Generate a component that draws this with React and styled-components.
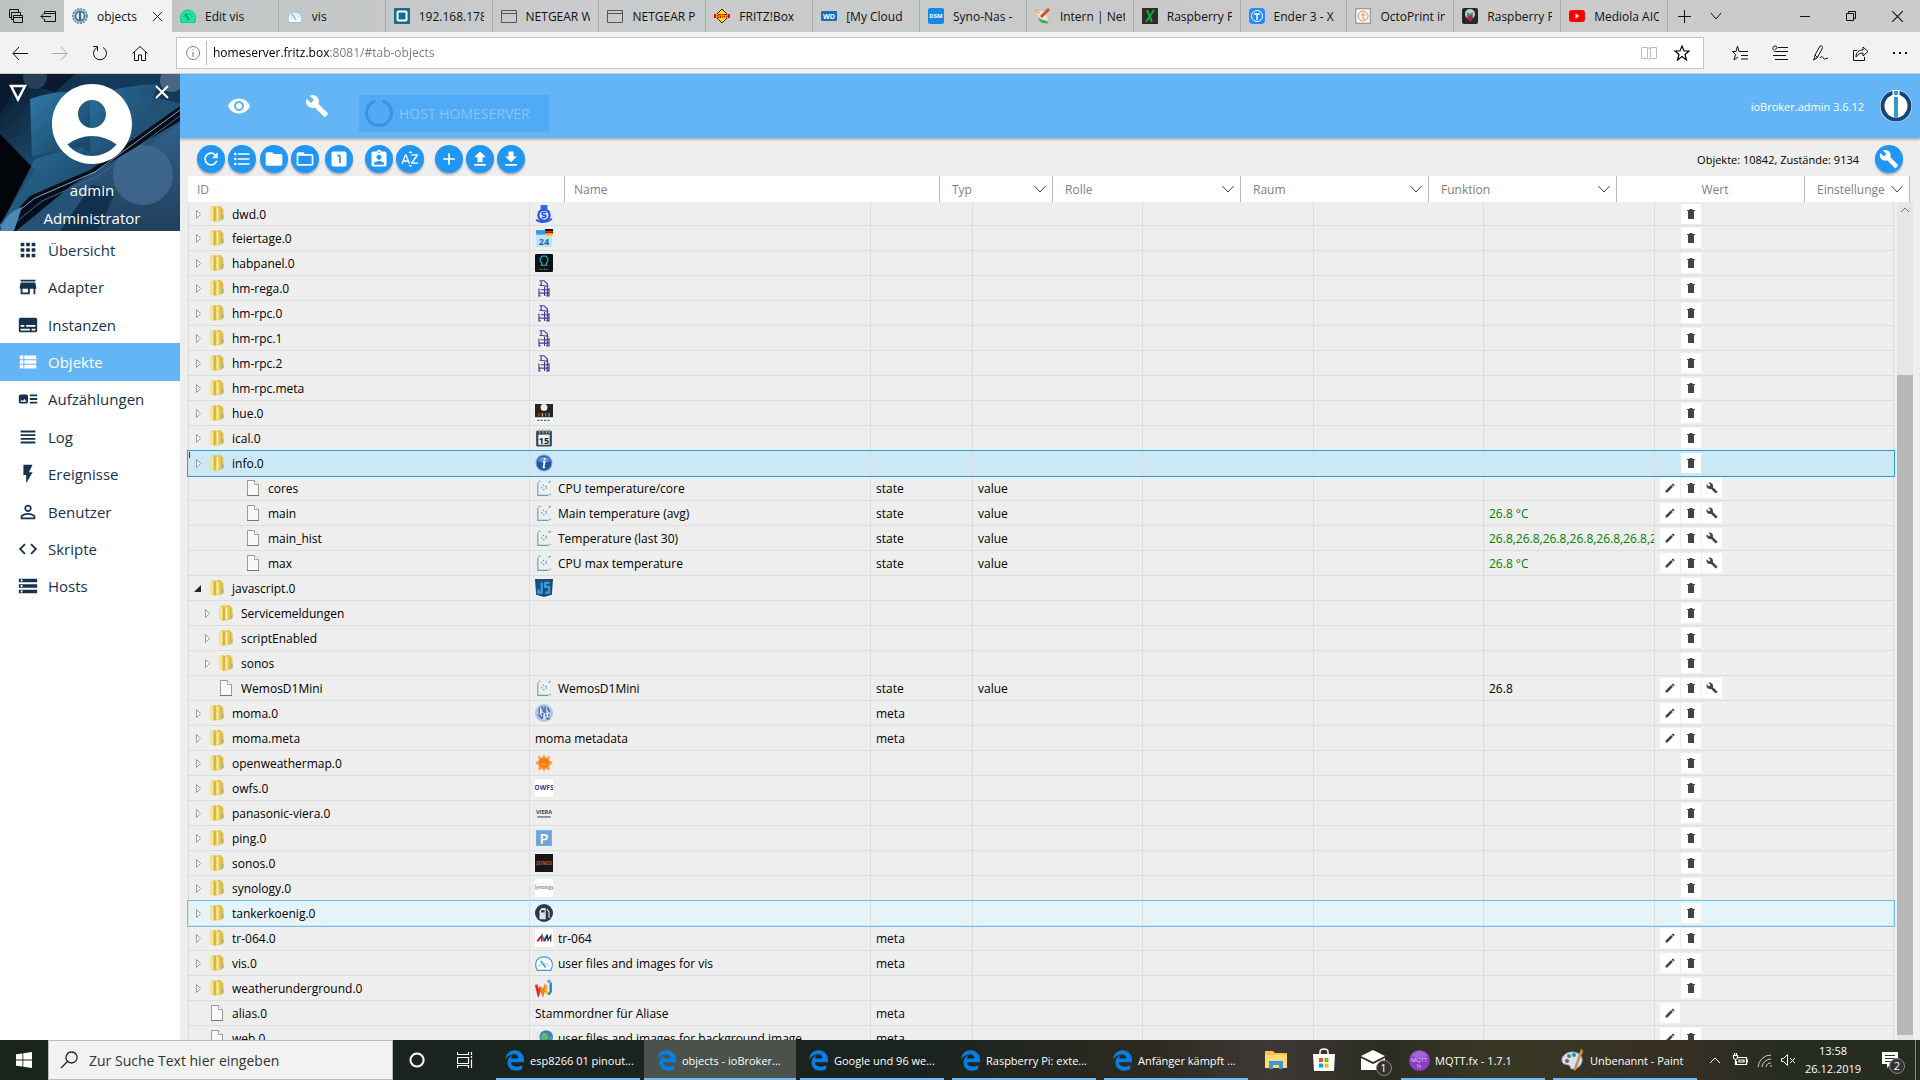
import React from "react";
import styled, { createGlobalStyle } from "styled-components";
import {
    MdApps, MdStore, MdSubtitles, MdViewList, MdArtTrack, MdViewHeadline, MdFlashOn,
    MdPermIdentity, MdCode, MdStorage, MdVisibility, MdBuild, MdAccountCircle,
    MdRefresh, MdFormatListBulleted, MdFolder, MdFolderOpen, MdLooksOne, MdAssignmentInd,
    MdSortByAlpha, MdAdd, MdFileUpload, MdFileDownload, MdEdit
} from "react-icons/md";
import { FaEdgeLegacy } from "react-icons/fa";

const GlobalStyle = createGlobalStyle`
    * {
        box-sizing: border-box;
    }

    body {
        margin: 0;
        overflow: hidden;
        background: #eee;
        font-family: "Open Sans", "Noto Sans", sans-serif;
        font-size: 12px;
        color: #000;
    }

    button, input, select {
        font-family: inherit;
        margin: 0;
        padding: 0;
        border: 0;
        border-radius: 0;
        background: none;
        outline: none;
    }

    svg {
        display: block;
        flex-shrink: 0;
    }
`;

const Page = styled.div`
    display: flex;
    flex-direction: column;
    height: 100vh;
`;

/* ---------- browser ---------- */

const TabBar = styled.div`
    display: flex;
    height: 32px;
    background: linear-gradient(90deg, #bfc3c4, #c9cbcc 30%, #c9c9c9 60%, #cbcbcb);
`;

const BarButton = styled.button`
    display: flex;
    align-items: center;
    justify-content: center;
    width: ${(props) => props.$width || 32}px;
    height: 100%;
    color: ${(props) => props.$color || "#111"};
`;

const Tabs = styled.div`
    display: flex;
    flex: 1;
    min-width: 0;
`;

const Tab = styled.a`
    display: flex;
    align-items: center;
    gap: 9px;
    flex: ${(props) => (props.$active ? "0 0 108px" : "1 1 0")};
    min-width: 0;
    padding: 0 8px;
    border-right: 1px solid ${(props) => (props.$active ? "#f2f2f2" : "#a9abac")};
    background: ${(props) => (props.$active ? "#f2f2f2" : "transparent")};
    color: #111;
    text-decoration: none;
`;

const TabTitle = styled.span`
    flex: 1;
    overflow: hidden;
    white-space: nowrap;
`;

const WindowButtons = styled.div`
    display: flex;
    width: 252px;
`;

const Spacer = styled.div`
    flex: 1;
`;

const AddressBar = styled.div`
    display: flex;
    align-items: center;
    height: 42px;
    background: #f2f2f2;
    border-bottom: 1px solid #ccc;
`;

const NavButtons = styled.div`
    display: flex;
    width: 176px;
    height: 40px;
`;

const AddressField = styled.label`
    display: flex;
    align-items: center;
    flex: 1;
    height: 32px;
    padding: 0 13px 0 9px;
    border: 1px solid #c5c5c5;
    background: #fff;
`;

const AddressInput = styled.input`
    flex: 1;
    height: 24px;
    margin: 0 12px 0 6px;
    padding-left: 6px;
    border-left: 1px solid #bbb;
    font-size: 12px;
    color: transparent;
    background: linear-gradient(90deg, #000 123px, #777 123px);
    background-clip: text;
`;

const AddressIcons = styled.div`
    display: flex;
    gap: 17px;
`;

const BrowserTools = styled.div`
    display: flex;
    height: 40px;
    padding-left: 16px;
`;

/* ---------- sidebar ---------- */

const Main = styled.main`
    display: flex;
    flex: 1;
    min-height: 0;
`;

const Sidebar = styled.aside`
    width: 180px;
    background: #fff;
    overflow: hidden;
`;

const UserBox = styled.div`
    position: relative;
    height: 157px;
    padding: 10px 5px 0 9px;
    color: #fff;
`;

const UserBackground = styled.svg`
    position: absolute;
    inset: 0;
    width: 100%;
    height: 100%;
`;

const UserTop = styled.div`
    position: relative;
    display: flex;
    justify-content: space-between;
    align-items: flex-start;
    margin-bottom: 12px;
`;

const Avatar = styled(MdAccountCircle)`
    margin: -8px 0;
`;

const UserName = styled.div`
    position: relative;
    font-size: 15px;
    line-height: 28px;
    text-align: center;
`;

const UserButton = styled.button`
    width: 20px;
    height: 16px;
    color: #fff;
`;

const Menu = styled.nav`
    display: flex;
    flex-direction: column;
    height: 374px;
`;

const MenuItem = styled.a`
    display: flex;
    align-items: center;
    flex: 1;
    gap: 9px;
    padding-left: 17px;
    font-size: 15px;
    color: ${(props) => (props.$active ? "#fff" : "#17324f")};
    background: ${(props) => (props.$active ? "#64b5f6" : "#fff")};
    text-decoration: none;
`;

/* ---------- content ---------- */

const Content = styled.section`
    display: flex;
    flex-direction: column;
    flex: 1;
    min-width: 0;
`;

const Header = styled.header`
    display: flex;
    align-items: center;
    height: 64px;
    padding: 0 8px 0 47px;
    background: #64b5f6;
    box-shadow: 0 2px 2px rgba(0, 0, 0, 0.25);
    color: #fff;
`;

const HeaderButton = styled.button`
    width: 24px;
    height: 24px;
    margin-right: 54px;
    color: #fff;
`;

const HostButton = styled.button`
    display: flex;
    align-items: center;
    gap: 6px;
    width: 190px;
    height: 36px;
    margin: 14px 0 0 -24px;
    padding-left: 6px;
    border-radius: 2px;
    background: #50abf6;
    box-shadow: 0 1px 2px rgba(0, 0, 0, 0.08);
    font-size: 14px;
    color: #85c4f9;
`;

const Version = styled.span`
    margin-right: 16px;
    font-size: 11px;
`;

const Toolbar = styled.div`
    display: flex;
    align-items: center;
    gap: 3px;
    height: 38px;
    padding: 4px 17px 0;
`;

const RoundButton = styled.button`
    display: flex;
    align-items: center;
    justify-content: center;
    width: 28px;
    height: 28px;
    margin-left: ${(props) => props.$space || 0}px;
    border-radius: 50%;
    background: #2196f3;
    box-shadow: 0 2px 2px rgba(0, 0, 0, 0.25);
    color: #fff;
`;

const Counter = styled.span`
    margin-right: 13px;
    font-size: 11px;
`;

const Filters = styled.div`
    display: grid;
    grid-template-columns: 377fr 375fr 113fr 188fr 188fr 188fr 188fr 105fr;
    height: 26px;
    margin: 0 10px 0 8px;
    background: #fff;
`;

const FilterCell = styled.label`
    position: relative;
    display: flex;
    align-items: center;
    justify-content: ${(props) => (props.$center ? "center" : "flex-start")};
    min-width: 0;
    padding-left: ${(props) => props.$pad || 9}px;
    border-right: 1px solid #b5b5b5;
    color: #808080;
`;

const FilterInput = styled.input`
    width: 100%;
    font-size: 12px;

    &::placeholder {
        color: #808080;
        opacity: 1;
    }
`;

const FilterSelect = styled.select`
    width: 100%;
    margin-right: 24px;
    appearance: none;
    font-size: 12px;
    color: #808080;
`;

const SelectArrow = styled.svg`
    position: absolute;
    right: 6px;
    pointer-events: none;
`;

const Body = styled.div`
    display: flex;
    flex: 1;
    min-height: 0;
    padding-right: 7px;
`;

const TableArea = styled.div`
    flex: 1;
    min-width: 0;
    padding: 0 3px 0 8px;
    overflow: hidden;
`;

const Table = styled.table`
    width: 100%;
    table-layout: fixed;
    border-collapse: separate;
    border-spacing: 0;
    line-height: 20px;
`;

const rowColors = {
    selected: ["#cbe8f6", "#26a0da"],
    hover: ["#e5f3fb", "#70c0e7"]
};

const Row = styled.tr`
    background: ${(props) => (props.$state ? rowColors[props.$state][0] : "transparent")};
    outline: ${(props) => (props.$state ? `1px solid ${rowColors[props.$state][1]}` : "none")};

    &:first-child td {
        height: 24px;
    }
`;

const Cell = styled.td`
    height: 25px;
    padding: ${(props) => (props.$text ? 2 : 0)}px 0 0 5px;
    border-right: 1px solid #ddd;
    border-bottom: 1px solid #ddd;
    overflow: hidden;
    white-space: nowrap;
    color: ${(props) => (props.$green ? "#008000" : "#000")};

    &:first-child {
        padding-left: 0;
        border-left: 1px solid #ddd;
    }
`;

const TreeNode = styled.div`
    position: relative;
    display: flex;
    align-items: center;
    height: 22px;
    padding-left: ${(props) => props.$level * 9 + 1}px;
`;

const Caret = styled.span`
    position: absolute;
    left: 0;
    top: 0;
    width: 1px;
    height: 6px;
    background: #6b2a1c;
`;

const Expander = styled.button`
    width: 16px;
    height: 16px;
    margin-right: 3px;
`;

const NodeName = styled.span`
    margin-left: 7px;
    padding-top: 2px;
`;

const NameBox = styled.div`
    display: flex;
    align-items: center;
    gap: 5px;
    height: 22px;
`;

const NameText = styled.span`
    padding-top: 2px;
`;

const Actions = styled.div`
    display: flex;
    gap: 1px;
    height: 20px;
`;

const ActionButton = styled.button`
    display: flex;
    align-items: center;
    justify-content: center;
    width: 20px;
    height: 20px;
    background: #fff;
    color: #444;
`;

const ActionGap = styled.span`
    width: 20px;
`;

const Scrollbar = styled.div`
    display: flex;
    flex-direction: column;
    width: 16px;
    padding-bottom: 5px;
    background: #e6e6e6;
`;

const ScrollTrack = styled.div`
    flex: 156;
`;

const ScrollThumb = styled.div`
    flex: 660;
    background: #b8b8b8;
`;

/* ---------- taskbar ---------- */

const Taskbar = styled.footer`
    display: flex;
    height: 40px;
    background: linear-gradient(90deg, #1a241b 0%, #1b2320 48%, #2c2a20 60%, #3e3836 66%, #2b2d22 72%, #3a3825 78%, #352f24 88%, #252d20 93%, #272c20 100%);
    color: #fff;
`;

const SearchBox = styled.label`
    display: flex;
    align-items: center;
    gap: 11px;
    width: 345px;
    padding-left: 11px;
    border: 1px solid #bbb;
    background: #f2f2f2;
    color: #222;
`;

const SearchInput = styled.input`
    flex: 1;
    font-size: 14px;

    &::placeholder {
        color: #333;
        opacity: 1;
    }
`;

const Task = styled.button`
    display: flex;
    align-items: center;
    gap: 5px;
    width: 152px;
    padding: 0 8px 0 12px;
    background-color: ${(props) => (props.$active ? "#4b524b" : "transparent")};
    background-image: linear-gradient(#76b9ed, #76b9ed);
    background-size: ${(props) => (props.$active ? 152 : 144)}px 2px;
    background-position: center bottom;
    background-repeat: no-repeat;
    color: #fff;
    font-size: 11px;
    white-space: nowrap;
`;

const TaskGroup = styled.div`
    display: flex;
    padding-left: 3px;
`;

const Clock = styled.div`
    width: 64px;
    margin-left: 2px;
    line-height: 18px;
    padding-top: 2px;
    font-size: 11px;
    text-align: center;
`;

const BadgeHolder = styled.span`
    position: relative;
`;

const Badge = styled.span`
    position: absolute;
    right: -7px;
    bottom: -6px;
    width: 16px;
    height: 16px;
    border: 1px solid #888;
    border-radius: 50%;
    background: #333;
    color: #fff;
    font-size: 11px;
    line-height: 14px;
    text-align: center;
`;

const DesktopStrip = styled.button`
    width: 5px;
    border-left: 1px solid #8a8a80;
`;

/* ---------- drawings ---------- */

const Line = ({ size = 16, d, width = 1, box = 16, fill = "none", color = "currentColor" }) => (
    <svg width={size} height={size} viewBox={`0 0 ${box} ${box}`} fill={fill} stroke={color} strokeWidth={width}>
        <path d={d} />
    </svg>
);

const Chevron = ({ up, size = 12 }) => (
    <Line size={size} box={12} d={up ? "M1 9l5-5 5 5" : "M1 3l5 6 5-6"} />
);

const Picture = ({ size = 16, children }) => (
    <svg width={size} height={size} viewBox="0 0 16 16">{children}</svg>
);

const Label = ({ x = 8, y = 11, size = 6, fill = "#fff", children, weight = 700 }) => (
    <text x={x} y={y} fontSize={size} fontWeight={weight} fill={fill} textAnchor="middle">{children}</text>
);

const Gauge = ({ fill, stroke }) => (
    <>
        <path d="M2 14.500A7 7 0 1 1 14 14.500Z" fill={fill} stroke={stroke} />
        <path d="M5 6l4 6" stroke={stroke} strokeWidth="1.500" />
        <path d="M4 10a4 4 0 0 1 8 0" fill="none" stroke={stroke} strokeDasharray="1 1" />
    </>
);

const pageIcon = <path d="M.5 2.500h15v12H.5zM.5 5.500h15" fill="none" stroke="#555" />;

const pictures = {
    objects: (
        <>
            <circle cx="8" cy="8" r="7" fill="#b9d2e4" stroke="#7a8994" strokeWidth="2" strokeDasharray="2 1" />
            <circle cx="8" cy="8" r="4.500" fill="#dcecf6" stroke="#2b6ca8" strokeWidth="1.500" />
            <path d="M8 3v10" stroke="#2b6ca8" strokeWidth="2" />
        </>
    ),
    editVis: (
        <>
            <path d="M1 14.500C-1 8 2 2 8 2s9 6 7 12.500z" fill="#1ee59b" stroke="#12c985" />
            <path d="M5 6l4 6" stroke="#0e8f62" strokeWidth="1.500" />
            <path d="M3.500 9a5 5 0 0 1 9 0" fill="none" stroke="#0e8f62" strokeDasharray="1 1" />
        </>
    ),
    visTab: <Gauge fill="#f4faff" stroke="#8cc0e6" />,
    vis: (
        <>
            <path d="M2 14.500C-1 9 1 2.500 8 2.500S17 9 14 14.500z" fill="#fff" stroke="#4199d6" />
            <path d="M5 6l4.500 6" stroke="#4199d6" strokeWidth="1.500" />
            <path d="M3.500 11a5 5 0 0 1 9 0" fill="none" stroke="#6fb2e0" strokeDasharray="1 1" />
        </>
    ),
    ccu: (
        <>
            <rect width="16" height="16" rx="1" fill="#136f92" />
            <rect x="3.500" y="3.500" width="9" height="9" rx="1" fill="#136f92" stroke="#fff" strokeWidth="2" />
        </>
    ),
    page: pageIcon,
    fritz: (
        <>
            <path d="M8 1l7 7-7 7-7-7z" fill="#ffe100" stroke="#222" />
            <path d="M0 6h16v4H0z" fill="#e2001a" />
            <Label y={10} size={5} fill="#ffe100">Fritz!</Label>
        </>
    ),
    wd: (
        <>
            <rect y="3" width="16" height="10" rx="1" fill="#1d6fae" />
            <Label y={11} size={7}>WD</Label>
        </>
    ),
    dsm: (
        <>
            <rect width="16" height="16" rx="2" fill="#158be5" />
            <Label y={10} size={6}>DSM</Label>
        </>
    ),
    intern: (
        <>
            <path d="M1 3h9l3 9-8 1z" fill="#efe6cc" />
            <path d="M0 2l4 1M1 4l4 1" stroke="#e59a3c" />
            <path d="M14 1L6 9" stroke="#d4502f" strokeWidth="3" />
            <path d="M3 9c3 4 7 2 11 6-5 1-10 0-11-6z" fill="#35b04a" />
        </>
    ),
    xda: (
        <>
            <rect width="16" height="16" fill="#2a2b2b" />
            <path d="M5 2l5 12M12 2L4 14" stroke="#1fa52f" strokeWidth="2" />
        </>
    ),
    thing: (
        <>
            <rect width="16" height="16" rx="4" fill="#248bfb" />
            <circle cx="8" cy="8" r="5.500" fill="none" stroke="#fff" />
            <path d="M5 6h6M8 6v6" stroke="#fff" strokeWidth="1.500" />
        </>
    ),
    octo: (
        <>
            <rect x=".5" y=".5" width="15" height="15" fill="#f4f4f4" stroke="#999" strokeWidth="1.500" />
            <circle cx="8" cy="8" r="5" fill="none" stroke="#f29a4a" />
            <path d="M8 4v7h3M6 7h5" fill="none" stroke="#f29a4a" />
        </>
    ),
    raspberry: (
        <>
            <rect width="16" height="16" rx="2" fill="#25282a" />
            <circle cx="8" cy="6" r="5" fill="#c8ccd0" />
            <path d="M5 7h6l-1 5-2 2-2-2z" fill="#b5214c" />
            <path d="M5 5l3 2 3-2" stroke="#3c9a46" strokeWidth="2" fill="none" />
        </>
    ),
    youtube: (
        <>
            <rect y="2" width="16" height="12" rx="3" fill="#f00" />
            <path d="M6.500 5.500v5l4-2.500z" fill="#fff" />
        </>
    ),
    dwd: (
        <>
            <path d="M5 0h6v4H5z" fill="#3563ee" />
            <circle cx="8" cy="9" r="5" fill="none" stroke="#2456ec" strokeWidth="2" />
            <path d="M10 7c-4-2-5 2-2 2s2 3-2 2M1 13c3 3 11 3 14-1" fill="none" stroke="#2456ec" strokeWidth="1.500" />
        </>
    ),
    feiertage: (
        <>
            <rect x="1" y="3" width="14" height="13" fill="#c1e2fb" />
            <rect x="1" y="1" width="8" height="4" fill="#2f9cec" />
            <path d="M9 0h7v2H9z" fill="#111" />
            <path d="M9 2h7v2H9z" fill="#d8000f" />
            <path d="M9 4h7v2H9z" fill="#f7c600" />
            <Label y={14} size={8} fill="#1667b7">24</Label>
        </>
    ),
    habpanel: (
        <>
            <rect width="16" height="16" rx="1" fill="#0c1114" />
            <path d="M6 10V8a3.500 3.500 0 1 1 4 0v2M5 10h6" fill="none" stroke="#17b8d8" />
            <path d="M4 13.500h8" stroke="#999" strokeDasharray="1 1" />
        </>
    ),
    hm: (
        <path
            d="M4 1.500h4l3 3v10M5.500 1v5M4 5.500l8 1M5 9.500h7M3.500 8.500v7M3 12.500h10M8.500 6v9M12.500 8v7M3 15h2M10 15h3"
            fill="none" stroke="#463a94"
        />
    ),
    hue: (
        <>
            <rect width="16" height="12" fill="#252525" />
            <circle cx="8" cy="3" r="3" fill="#f0f0ea" />
            <path d="M0 12h16v4H0z" fill="#fff" />
            <path d="M3.500 8v3" stroke="#e23b31" />
            <path d="M6.500 8v3" stroke="#f4d12c" />
            <path d="M9.500 8v3" stroke="#46a4df" />
            <path d="M12.500 8v3" stroke="#aaa" />
            <path d="M2 14.500h12" stroke="#3a5f9a" strokeDasharray="2 1" />
        </>
    ),
    ical: (
        <>
            <rect x="1" y="1.500" width="14" height="14" rx="1" fill="#3a4750" />
            <rect x="3" y="5" width="10" height="9" fill="#f5f5f5" />
            <path d="M4 0v4M7 0v4M10 0v4M12.500 0v4" stroke="#8bb4d6" />
            <Label y={13} size={8} fill="#222">15</Label>
        </>
    ),
    info: (
        <>
            <circle cx="8" cy="8" r="7" fill="#1d55ab" stroke="#7f97bd" />
            <path d="M2.500 6a6 6 0 0 1 11 0c-3 2-8 2-11 0z" fill="#5e94dc" />
            <circle cx="8.500" cy="4.500" r="1" fill="#fff" />
            <path d="M7 7h1.500l-1 5H9" fill="none" stroke="#fff" strokeWidth="1.500" />
        </>
    ),
    state: (
        <>
            <path d="M2.500 3v11.500H12M13.500 13v1.500M14 2l-2 1M3 2h2" fill="none" stroke="#5aa3ba" />
            <circle cx="8" cy="7.500" r="2" fill="none" stroke="#4a8ca6" strokeDasharray="1 1.500" />
        </>
    ),
    js: (
        <>
            <path d="M0 0h16l-1 14-7 2-7-2z" fill="#1a4c7c" />
            <path d="M3 9v3h3V3M13 3.500h-4V7h3.500v5H9" fill="none" stroke="#3a9bd7" strokeWidth="2" />
        </>
    ),
    moma: (
        <>
            <circle cx="8" cy="8" r="8" fill="#adc6e8" />
            <path d="M4 3v5M6 2l2 5M9 2v6M11 3l2 4M3 9l3 4M7 8v5M9 10h4M10 13h3" stroke="#5272ac" strokeWidth="1.500" />
            <path d="M5 4v4M8 9v5M11 8v3" stroke="#fff" />
        </>
    ),
    sun: (
        <>
            <path d="M8 0l1.500 3 4-1.500-1 3.500L16 8l-3.500 2.500 1 4-4-1.500L8 16l-1.500-3-4 1.500 1-4L0 8l3.500-3-1-3.500 4 1.500z" fill="#f9a046" />
            <circle cx="8" cy="8" r="4.500" fill="#f67c14" />
            <path d="M6 9.500h4" stroke="#ffb45c" />
        </>
    ),
    owfs: (
        <>
            <rect width="16" height="16" fill="#fff" />
            <Label y={10} size={6} fill="#2f4689">OWFS</Label>
        </>
    ),
    viera: (
        <>
            <Label y={9} size={5} fill="#444">VIERA</Label>
            <path d="M2 11.500h12" stroke="#555" />
        </>
    ),
    ping: (
        <>
            <rect x="1" y="1" width="14" height="14" fill="#6ea4d8" />
            <Label y={13} size={13} weight={600}>P</Label>
        </>
    ),
    sonos: (
        <>
            <rect width="16" height="16" fill="#171717" />
            <Label y={10} size={4} fill="#d8532d">SONOS</Label>
        </>
    ),
    synology: (
        <>
            <rect width="16" height="16" fill="#fff" />
            <Label y={9} size={4} fill="#777" weight={600}>Synology</Label>
        </>
    ),
    fuel: (
        <>
            <circle cx="8" cy="8" r="8" fill="#28394a" />
            <path d="M4 13.500V6l2-2.500h3.500v10z" fill="#dfe3e6" />
            <path d="M5.500 5.500h3v2h-3z" fill="#28394a" />
            <path d="M10.500 4.500L12.500 7v5.500" fill="none" stroke="#dfe3e6" />
        </>
    ),
    avm: (
        <>
            <rect width="16" height="16" fill="#fff" />
            <path d="M2 11l4-5v5" fill="none" stroke="#e2001a" strokeWidth="1.500" />
            <path d="M6 5l2 5 3-5" fill="none" stroke="#2089d3" strokeWidth="1.500" />
            <path d="M8.500 11l2.500-5 .5 4L14 6v5" fill="none" stroke="#222" />
        </>
    ),
    wu: (
        <>
            <path d="M1 5l2 8 2-6" fill="none" stroke="#e4312c" strokeWidth="2.500" />
            <path d="M5 7l2 6 2.500-8" fill="none" stroke="#f58220" strokeWidth="2.500" />
            <path d="M10 6v5q2 5 4-1V5" fill="none" stroke="#f9b81b" strokeWidth="2" />
            <path d="M14 3v8l-2 3" fill="none" stroke="#2587c8" strokeWidth="2" />
            <circle cx="12.500" cy="2" r="1.500" fill="#3fb3e6" />
        </>
    ),
    web: (
        <>
            <path d="M1 2h6v13H1z" fill="#e6e9ec" />
            <circle cx="10" cy="7" r="6" fill="#3b83b8" />
            <path d="M7 3l4 1 1 4-4 4-3-4zM13 8l2-2-1 5z" fill="#61b56d" />
        </>
    )
};

const FolderIcon = () => (
    <svg width="16" height="18" viewBox="0 0 16 18">
        <path d="M1.500 2.500L4 1h3v14.500L5.500 17l-4-1.500z" fill="#e9cf5e" />
        <path d="M2 3l2-1v14l-2-.5z" fill="#f5e894" />
        <path d="M7 3l1.500-2H12l1 2 1.500 1v10L13 15.500 7 16.500z" fill="#e6c653" />
        <path d="M6 2.500v14" stroke="#c39f2e" />
        <path d="M8.500 3v12.500" stroke="#f8efb4" strokeWidth="2" />
        <path d="M12.500 3v12" stroke="#d6b340" />
        <path d="M14 10v4" stroke="#67b9cb" />
    </svg>
);

const FileIcon = () => (
    <svg width="16" height="18" viewBox="0 0 16 18">
        <path d="M2.500 1.500h7l4 4v11h-11z" fill="#f9faf6" stroke="#9a9a9a" />
        <path d="M9.500 1.500v4h4" fill="#fff" stroke="#a5a5a5" />
        <path d="M2 16.500h12" stroke="#777" />
    </svg>
);

const Logo = () => (
    <svg width="32" height="32" viewBox="0 0 32 32">
        <circle cx="16" cy="16" r="16" fill="#fff" />
        <circle cx="16" cy="16" r="13.500" fill="#fff" stroke="#164477" strokeWidth="4" />
        <path d="M12.500 0h7v7h-7z" fill="#fff" />
        <path d="M14 1h4v4h-4zM14 7h4v20h-4z" fill="#3399cc" />
    </svg>
);

const PaintIcon = () => (
    <svg width="24" height="24" viewBox="0 0 24 24">
        <path d="M11 4c6 0 11 4 10 9-1 6-6 8-10 8-2 0-1-3-3-4-3-1-6 0-7-4-1-5 5-9 10-9z" fill="#cfe6f5" stroke="#86b4d3" />
        <circle cx="6" cy="13" r="2" fill="#d7372e" />
        <circle cx="8" cy="8" r="2" fill="#3d9c43" />
        <circle cx="13" cy="7" r="2" fill="#3c7fd0" />
        <path d="M20 1c3 1 2 4 0 7l-5 14c-2 1-3 0-2-2L18 6z" fill="#d98a3b" />
    </svg>
);

const Windows = () => (
    <svg width="16" height="16" viewBox="0 0 16 16" fill="#fff">
        <path d="M0 2.300L6.500 1.400v6.200H0zM7.300 1.300L16 0v7.600H7.300zM0 8.400h6.500v6.200L0 13.700zM7.300 8.400H16V16l-8.700-1.300z" />
    </svg>
);

const TrashIcon = () => (
    <svg width="8" height="10" viewBox="0 0 8 10" fill="#444">
        <path d="M2.500 0h3v1H8v1H0V1h2.500zM1 2h6v8H1z" />
    </svg>
);

/* ---------- data ---------- */

const browserTabs = [
    ["Edit vis", "editVis"],
    ["vis", "visTab"],
    ["192.168.178", "ccu"],
    ["NETGEAR W", "page"],
    ["NETGEAR P", "page"],
    ["FRITZ!Box", "fritz"],
    ["[My Cloud", "wd"],
    ["Syno-Nas -", "dsm"],
    ["Intern | Net", "intern"],
    ["Raspberry P", "xda"],
    ["Ender 3 - X", "thing"],
    ["OctoPrint in", "octo"],
    ["Raspberry P", "raspberry"],
    ["Mediola AIO", "youtube"]
];

const menu = [
    ["Übersicht", MdApps],
    ["Adapter", MdStore],
    ["Instanzen", MdSubtitles],
    ["Objekte", MdViewList],
    ["Aufzählungen", MdArtTrack],
    ["Log", MdViewHeadline],
    ["Ereignisse", MdFlashOn],
    ["Benutzer", MdPermIdentity],
    ["Skripte", MdCode],
    ["Hosts", MdStorage]
];

const tools = [
    [MdRefresh, "Aktualisieren"],
    [MdFormatListBulleted, "Liste"],
    [MdFolder, "Alle zuklappen", 1],
    [MdFolderOpen, "Alle aufklappen"],
    [MdLooksOne, "Ebene", 3],
    [MdAssignmentInd, "Expertenmodus", 9],
    [MdSortByAlpha, "Sortieren"],
    [MdAdd, "Neu", 8],
    [MdFileUpload, "Hochladen"],
    [MdFileDownload, "Herunterladen"]
];

const columnWidths = [342, 341, 102, 170, 171, 170, 171, 239];

// actions: e = edit, d = delete, c = custom settings
const objects = [
    { id: "dwd.0", icon: "dwd" },
    { id: "feiertage.0", icon: "feiertage" },
    { id: "habpanel.0", icon: "habpanel" },
    { id: "hm-rega.0", icon: "hm" },
    { id: "hm-rpc.0", icon: "hm" },
    { id: "hm-rpc.1", icon: "hm" },
    { id: "hm-rpc.2", icon: "hm" },
    { id: "hm-rpc.meta" },
    { id: "hue.0", icon: "hue" },
    { id: "ical.0", icon: "ical" },
    { id: "info.0", icon: "info", state: "selected" },
    { id: "cores", file: true, level: 4, icon: "state", name: "CPU temperature/core", type: "state", role: "value", actions: "edc" },
    { id: "main", file: true, level: 4, icon: "state", name: "Main temperature (avg)", type: "state", role: "value", value: "26.8 °C", green: true, actions: "edc" },
    { id: "main_hist", file: true, level: 4, icon: "state", name: "Temperature (last 30)", type: "state", role: "value", value: "26.8,26.8,26.8,26.8,26.8,26.8,26.8,26.8", green: true, actions: "edc" },
    { id: "max", file: true, level: 4, icon: "state", name: "CPU max temperature", type: "state", role: "value", value: "26.8 °C", green: true, actions: "edc" },
    { id: "javascript.0", icon: "js", open: true },
    { id: "Servicemeldungen", level: 1 },
    { id: "scriptEnabled", level: 1 },
    { id: "sonos", level: 1 },
    { id: "WemosD1Mini", file: true, level: 1, icon: "state", name: "WemosD1Mini", type: "state", role: "value", value: "26.8", actions: "edc" },
    { id: "moma.0", icon: "moma", type: "meta", actions: "ed" },
    { id: "moma.meta", name: "moma metadata", type: "meta", actions: "ed" },
    { id: "openweathermap.0", icon: "sun" },
    { id: "owfs.0", icon: "owfs" },
    { id: "panasonic-viera.0", icon: "viera" },
    { id: "ping.0", icon: "ping" },
    { id: "sonos.0", icon: "sonos" },
    { id: "synology.0", icon: "synology" },
    { id: "tankerkoenig.0", icon: "fuel", state: "hover" },
    { id: "tr-064.0", icon: "avm", name: "tr-064", type: "meta", actions: "ed" },
    { id: "vis.0", icon: "vis", name: "user files and images for vis", type: "meta", actions: "ed" },
    { id: "weatherunderground.0", icon: "wu" },
    { id: "alias.0", file: true, name: "Stammordner für Aliase", type: "meta", actions: "e" },
    { id: "web.0", file: true, icon: "web", name: "user files and images for background image", type: "meta", actions: "ed" }
];

/* ---------- parts ---------- */

const Browser = () => (
    <>
        <TabBar>
            <BarButton aria-label="Tabs"><Line size={16} d="M1.500 1.500h9v3M1.500 1.500v8h2M3.500 4.500h9v3M3.500 4.500v7h2M5.500 7.500h9v7h-9zM5.500 9.500h9" /></BarButton>
            <BarButton aria-label="Tabs ablegen"><Line size={16} d="M4.500 6V3.500h11v10h-11V11M4.500 5.500h11M11 8.500H1M4 5.500l-3 3 3 3" /></BarButton>
            <Tabs>
                <Tab href="#tab-objects" $active>
                    <Picture>{pictures.objects}</Picture>
                    <TabTitle>objects</TabTitle>
                    <Line size={11} box={12} d="M1 1l10 10M11 1L1 11" />
                </Tab>
                {browserTabs.map(([title, icon], index) => (
                    <Tab key={index} href="#tab">
                        <Picture>{pictures[icon]}</Picture>
                        <TabTitle>{title}</TabTitle>
                    </Tab>
                ))}
            </Tabs>
            <WindowButtons>
                <BarButton aria-label="Neuer Tab"><Line size={14} box={14} d="M7.500 1v13M1 7.500h13" /></BarButton>
                <BarButton aria-label="Tabvorschau"><Chevron /></BarButton>
                <Spacer />
                <BarButton $width={46} aria-label="Minimieren"><Line size={10} box={10} d="M0 5.500h10" /></BarButton>
                <BarButton $width={46} aria-label="Verkleinern"><Line size={10} box={10} d="M.5 2.500h7v7h-7zM2.500 2V.5h7v7H8" /></BarButton>
                <BarButton $width={46} aria-label="Schließen"><Line size={11} box={10} d="M0 0l10 10M10 0L0 10" /></BarButton>
            </WindowButtons>
        </TabBar>
        <AddressBar>
            <NavButtons>
                <BarButton $width={40} aria-label="Zurück"><Line d="M16 8.500H1M7 2L1 8.500 7 15" /></BarButton>
                <BarButton $width={40} $color="#aaa" aria-label="Vorwärts"><Line d="M0 8.500h15M9 2l6 6.500L9 15" /></BarButton>
                <BarButton $width={40} aria-label="Aktualisieren"><Line d="M5 2.500A6.500 6.500 0 1 0 11 2.500M1 1.500h4.500V6" /></BarButton>
                <BarButton $width={40} aria-label="Startseite"><Line d="M.5 8.500L8 1.500l7.500 7M2.500 7v8.500h4V10h3v5.500h4V7" /></BarButton>
            </NavButtons>
            <AddressField>
                <Line size={14} box={14} color="#777" d="M7 .5a6.500 6.500 0 1 0 .1 0M7 6v5M7 3.500v1" />
                <AddressInput aria-label="Adresse" defaultValue="homeserver.fritz.box:8081/#tab-objects" />
                <AddressIcons>
                    <Line color="#bbb" d="M.5 2.500h6l1.500 1 1.500-1h6v11h-6l-1.500 1-1.500-1h-6zM6.500 2.500v11M9.500 2.500v11" />
                    <Line width={1.2} d="M8 1l2 5h5l-4 3.500 1.500 5.500L8 11.500 3.500 15 5 9.500 1 6h5z" />
                </AddressIcons>
            </AddressField>
            <BrowserTools>
                <BarButton $width={40} aria-label="Favoriten"><Line d="M9 6.500H7L5.500 1 4 6.500H.5l3 3L2 15l4-3M8 6.500h8M9 10.500h7M9 14h7" /></BarButton>
                <BarButton $width={40} aria-label="Leseliste"><Line d="M6 2.500h10M4 6.500h12M1 10.500h13M3 14.500h13M4 6.500C0 6 0 1 3 1s2 4 0 3" /></BarButton>
                <BarButton $width={40} aria-label="Notizen"><Line d="M2 15l1-5L8 1c2-1 3 1 2 3L5 13l-4 2M3 10l2 2M8 13c3-4 3 2 5 1l3-1" /></BarButton>
                <BarButton $width={40} aria-label="Teilen"><Line d="M5 5.500H1.500v10h11V12M4 12c0-5 3-7 7-7V2l5 4.500-5 4.500V8c-3 0-5 1-7 4z" /></BarButton>
                <BarButton $width={40} aria-label="Mehr"><Line color="none" fill="#111" d="M1 7h2v2H1zM7 7h2v2H7zM13 7h2v2h-2z" /></BarButton>
            </BrowserTools>
        </AddressBar>
    </>
);

const SideMenu = () => (
    <Sidebar>
        <UserBox>
            <UserBackground viewBox="0 0 180 157" preserveAspectRatio="none">
                <defs>
                    <linearGradient id="night" x1="0" y1="0" x2="1" y2="1">
                        <stop offset="0" stopColor="#061424" />
                        <stop offset=".4" stopColor="#1d4c70" />
                        <stop offset="1" stopColor="#3a5f83" />
                    </linearGradient>
                    <linearGradient id="glass" x1="0" y1="0" x2="1" y2="1">
                        <stop offset="0" stopColor="#2f7aa8" />
                        <stop offset="1" stopColor="#163d5c" />
                    </linearGradient>
                    <linearGradient id="floor" x1="0" y1="0" x2="0" y2="1">
                        <stop offset="0" stopColor="#31608a" />
                        <stop offset="1" stopColor="#213f5c" />
                    </linearGradient>
                </defs>
                <rect width="180" height="157" fill="url(#night)" />
                <path d="M0 0h75l-20 18q-25-8-40-4L0 40z" fill="#0a1a2e" />
                <circle cx="35" cy="3" r="12" fill="#3c5878" opacity=".6" />
                <path d="M30 25q30-10 50-6l20 16-8 42q-30-4-60 6z" fill="url(#glass)" />
                <path d="M75 0h105v30q-30-10-60-6z" fill="#15395a" />
                <path d="M90 24q35-14 68-14l-16 50-52 20z" fill="url(#glass)" opacity=".8" />
                <path d="M0 60l35 36L0 150z" fill="#020509" />
                <path d="M35 85q25-8 50-12l-20 45-60 25z" fill="url(#glass)" opacity=".8" />
                <path d="M60 157l30-45 90-62v107z" fill="url(#floor)" />
                <path d="M60 157l32-46q14 2 22 10l-16 36z" fill="#10304c" />
                <circle cx="143" cy="101" r="30" fill="#426a92" opacity=".8" />
                <path d="M180 32L90 96 30 122-2 157h18l56-46 108-64z" fill="#050d18" />
                <path d="M180 36L95 98 35 124 0 152" fill="none" stroke="#7fa6c3" />
                <path d="M180 42L98 102 42 127 5 157" fill="none" stroke="#416b8e" />
                <path d="M0 157c3-14 12-20 22-24l-8 24z" fill="#4e88b3" />
                <circle cx="172" cy="6" r="12" fill="#56718c" opacity=".8" />
            </UserBackground>
            <UserTop>
                <UserButton aria-label="Menü">
                    <Line size={18} box={18} width={2.5} d="M2 2h14L9 15.500z" />
                </UserButton>
                <Avatar size={96} />
                <UserButton aria-label="Menü schließen">
                    <Line size={14} box={14} width={2} d="M1 1l12 12M13 1L1 13" />
                </UserButton>
            </UserTop>
            <UserName>admin</UserName>
            <UserName>Administrator</UserName>
        </UserBox>
        <Menu>
            {menu.map(([title, Icon]) => (
                <MenuItem key={title} href="#tab" $active={title === "Objekte"}>
                    <Icon size={22} />
                    {title}
                </MenuItem>
            ))}
        </Menu>
    </Sidebar>
);

const FilterList = ({ title }) => (
    <FilterCell $pad={12}>
        <FilterSelect aria-label={title}>
            <option>{title}</option>
        </FilterSelect>
        <SelectArrow width="12" height="12" viewBox="0 0 12 12" fill="none" stroke="#444">
            <path d="M.5 3l5.500 6 5.500-6" />
        </SelectArrow>
    </FilterCell>
);

const ObjectRow = ({ object }) => {
    const actions = object.actions || "d";

    return (
        <Row $state={object.state}>
            <Cell>
                <TreeNode $level={object.level || 0}>
                    {object.state === "selected" && <Caret />}
                    <Expander aria-label="Aufklappen">
                        {!object.file && !object.open && <Line color="#999" fill="#fff" d="M6.500 4.500v8l4-4z" />}
                        {object.open && <Line color="none" fill="#222" d="M11 5v7H4z" />}
                    </Expander>
                    {object.file ? <FileIcon /> : <FolderIcon />}
                    <NodeName>{object.id}</NodeName>
                </TreeNode>
            </Cell>
            <Cell>
                <NameBox>
                    {object.icon && <Picture size={18}>{pictures[object.icon]}</Picture>}
                    <NameText>{object.name}</NameText>
                </NameBox>
            </Cell>
            <Cell $text>{object.type}</Cell>
            <Cell $text>{object.role}</Cell>
            <Cell />
            <Cell />
            <Cell $text $green={object.green}>{object.value}</Cell>
            <Cell>
                <Actions>
                    {actions.includes("e")
                        ? <ActionButton aria-label="Bearbeiten"><MdEdit size={12} /></ActionButton>
                        : <ActionGap />}
                    {actions.includes("d") && <ActionButton aria-label="Löschen"><TrashIcon /></ActionButton>}
                    {actions.includes("c") && <ActionButton aria-label="Einstellungen"><MdBuild size={12} /></ActionButton>}
                </Actions>
            </Cell>
        </Row>
    );
};

const ObjectsPage = () => (
    <Content>
        <Header>
            <HeaderButton aria-label="Sichtbarkeit"><MdVisibility size={24} /></HeaderButton>
            <HeaderButton aria-label="Werkzeuge"><MdBuild size={24} /></HeaderButton>
            <HostButton>
                <svg width="28" height="28" viewBox="0 0 28 28" fill="none" stroke="#4590d4" strokeWidth="3">
                    <path d="M10.500 2a12.500 12.500 0 1 0 7 0" />
                    <path d="M14 1v20" stroke="#4ba3ec" strokeWidth="1" />
                </svg>
                HOST HOMESERVER
            </HostButton>
            <Spacer />
            <Version>ioBroker.admin 3.6.12</Version>
            <Logo />
        </Header>
        <Toolbar>
            {tools.map(([Icon, title, space]) => (
                <RoundButton key={title} $space={space} aria-label={title}><Icon size={20} /></RoundButton>
            ))}
            <Spacer />
            <Counter>Objekte: 10842, Zustände: 9134</Counter>
            <RoundButton aria-label="Spalten"><MdBuild size={20} /></RoundButton>
        </Toolbar>
        <Filters>
            <FilterCell><FilterInput aria-label="ID" placeholder="ID" /></FilterCell>
            <FilterCell><FilterInput aria-label="Name" placeholder="Name" /></FilterCell>
            <FilterList title="Typ" />
            <FilterList title="Rolle" />
            <FilterList title="Raum" />
            <FilterList title="Funktion" />
            <FilterCell $center>Wert</FilterCell>
            <FilterList title="Einstellungen" />
        </Filters>
        <Body>
            <TableArea>
                <Table>
                    <colgroup>
                        {columnWidths.map((width, index) => <col key={index} style={{ width }} />)}
                    </colgroup>
                    <tbody>
                        {objects.map((object) => <ObjectRow key={object.id} object={object} />)}
                    </tbody>
                </Table>
            </TableArea>
            <Scrollbar>
                <svg width="16" height="17" viewBox="0 0 16 17" fill="none" stroke="#777">
                    <path d="M4 10l4-4 4 4" />
                </svg>
                <ScrollTrack />
                <ScrollThumb />
            </Scrollbar>
        </Body>
    </Content>
);

const edgeTasks = ["esp8266 01 pinout...", "objects - ioBroker...", "Google und 96 we...", "Raspberry Pi: exte...", "Anfänger kämpft ..."];

const BottomBar = () => (
    <Taskbar>
        <BarButton $width={48} aria-label="Start"><Windows /></BarButton>
        <SearchBox>
            <Line size={18} box={18} width={1.3} d="M11.500 1a5.500 5.500 0 1 0 .1 0M7.500 10.500L1 17" />
            <SearchInput aria-label="Suche" placeholder="Zur Suche Text hier eingeben" />
        </SearchBox>
        <BarButton $width={48} $color="#fff" aria-label="Cortana"><Line width={2} d="M8 1.500a6.500 6.500 0 1 0 .1 0" /></BarButton>
        <BarButton $width={48} $color="#fff" aria-label="Taskansicht"><Line width={1.2} d="M.5 0v2.500h11V0M.5 5.500h11v6H.5zM.5 16v-2.500h11V16M14.500 0v3M14.500 7.500v8.500M14.500 4v2" /></BarButton>
        <TaskGroup>
            {edgeTasks.map((title, index) => (
                <Task key={title} $active={index === 1}>
                    <FaEdgeLegacy size={21} color="#0a7ee0" />
                    {title}
                </Task>
            ))}
        </TaskGroup>
        <BarButton $width={48} aria-label="Explorer">
            <svg width="22" height="18" viewBox="0 0 22 18">
                <path d="M0 0h8l2 2h12v15H0z" fill="#f5c34b" />
                <path d="M0 4h22v13H0z" fill="#ffdc76" />
                <path d="M4 18v-8h14v8h-4v-4H8v4z" fill="#3a96dd" />
            </svg>
        </BarButton>
        <BarButton $width={48} aria-label="Store">
            <svg width="24" height="24" viewBox="0 0 24 24">
                <path d="M8 7V4q0-3 4-3t4 3v3" fill="none" stroke="#fff" strokeWidth="1.500" />
                <path d="M1 6h22l-1 17H2z" fill="#fff" />
                <path d="M7 10h4v4H7z" fill="#f25022" />
                <path d="M12.500 10h4v4h-4z" fill="#7fba00" />
                <path d="M7 15.500h4v4H7z" fill="#00a4ef" />
                <path d="M12.500 15.500h4v4h-4z" fill="#ffb900" />
            </svg>
        </BarButton>
        <BarButton $width={49} aria-label="Mail">
            <BadgeHolder>
                <svg width="24" height="20" viewBox="0 0 24 20" fill="#fff">
                    <path d="M0 6l12-6 12 6-12 6z" />
                    <path d="M0 8l12 6 12-6v12H0z" />
                </svg>
                <Badge>1</Badge>
            </BadgeHolder>
        </BarButton>
        <Task>
            <svg width="21" height="21" viewBox="0 0 21 21">
                <circle cx="10.500" cy="10.500" r="10.500" fill="#8a3fc0" />
                <path d="M2 6a10 10 0 0 1 17 0q-8 4-17 0z" fill="#a566d4" />
                <text x="10" y="12" fontSize="6" fill="#e5cdf5" textAnchor="middle">MQTT</text>
                <text x="10" y="18" fontSize="5" fill="#e5cdf5" textAnchor="middle">fx</text>
            </svg>
            MQTT.fx - 1.7.1
        </Task>
        <Task>
            <PaintIcon />
            Unbenannt - Paint
        </Task>
        <Spacer />
        <BarButton $width={24} $color="#fff" aria-label="Ausgeblendete Symbole"><Chevron up /></BarButton>
        <BarButton $width={26} $color="#fff" aria-label="Akku">
            <Line width={1.2} d="M6 5.500h8.500v7H4.500V9M15.500 7.500v3M1.500 3.500h4V6q-2 3-4 0zM2.500 1v2M4.500 1v2M3.500 8v4.500H5M7 8h5v2H7z" />
        </BarButton>
        <BarButton $width={24} $color="#ccc" aria-label="WLAN">
            <Line d="M1 15A13 13 0 0 1 14 3M5 15a9 9 0 0 1 9-8M9 15a5 5 0 0 1 5-4M13 14h2" />
        </BarButton>
        <BarButton $width={22} $color="#fff" aria-label="Lautstärke">
            <Line d="M1.500 6.500h2l4-4v11l-4-4h-2zM10 6l5 5M15 6l-5 5" />
        </BarButton>
        <Clock>13:58<br />26.12.2019</Clock>
        <BarButton $width={50} $color="#fff" aria-label="Info-Center">
            <BadgeHolder>
                <svg width="16" height="16" viewBox="0 0 16 16">
                    <path d="M0 0h16v12H9l-4 4v-4H0z" fill="#fff" />
                    <path d="M3 3.500h10M3 6.500h10M3 9.500h6" stroke="#2a3022" />
                </svg>
                <Badge>2</Badge>
            </BadgeHolder>
        </BarButton>
        <DesktopStrip aria-label="Desktop anzeigen" />
    </Taskbar>
);

const App = () => (
    <>
        <GlobalStyle />
        <Page>
            <Browser />
            <Main>
                <SideMenu />
                <ObjectsPage />
            </Main>
            <BottomBar />
        </Page>
    </>
);

export default App;
